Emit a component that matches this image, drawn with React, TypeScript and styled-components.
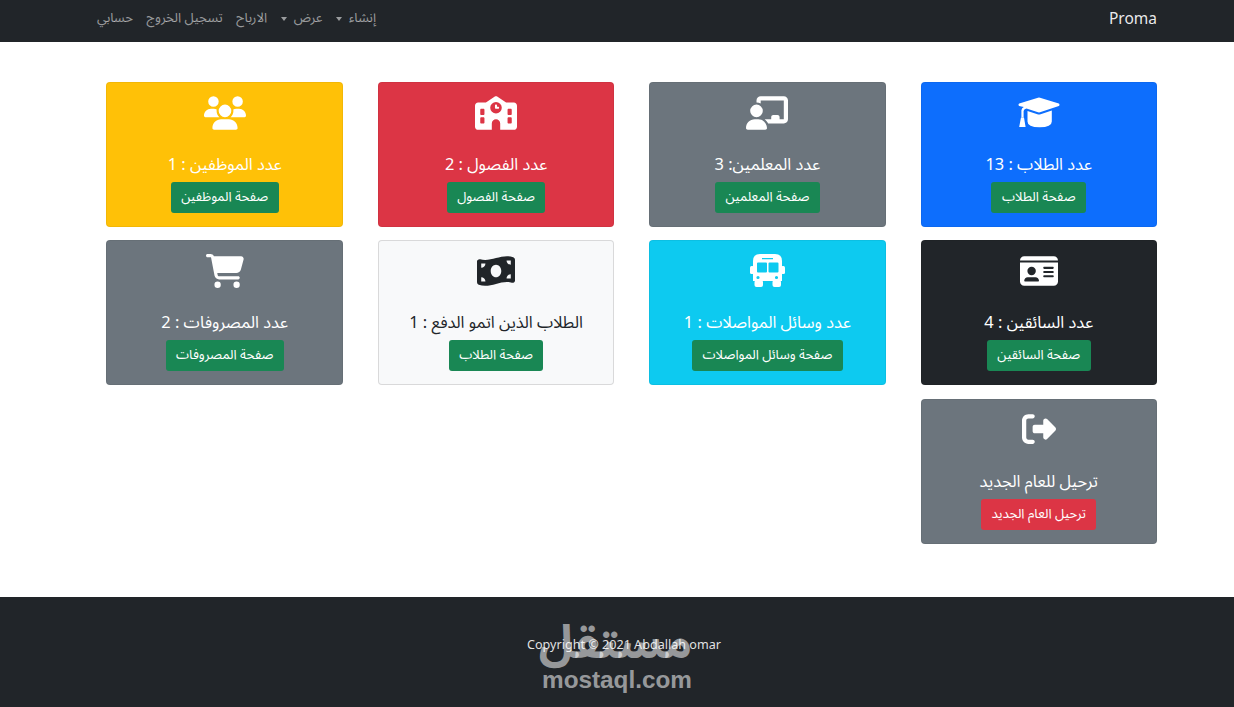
import React from "react";
import styled, { createGlobalStyle } from "styled-components";
import { FaChalkboardUser, FaSchool, FaUsers, FaIdCard, FaMoneyBillWave, FaCartShopping, FaRightFromBracket } from "react-icons/fa6";

const Global = createGlobalStyle`
  html, body { margin: 0; padding: 0; background: #fff; }
  body { font-family: "Noto Sans Arabic", "Noto Naskh Arabic", "Noto Sans", "DejaVu Sans", sans-serif; }
  * { box-sizing: border-box; }
`;

const Page = styled.div`
  position: relative;
  width: 1234px;
  height: 707px;
  overflow: hidden;
  display: flex;
  flex-direction: column;
`;

const Navbar = styled.nav`
  height: 42px;
  background: #212529;
  display: flex;
  align-items: center;
  justify-content: space-between;
  padding: 0 77px 2px 97px;
`;

const Brand = styled.a`
  color: rgba(255, 255, 255, 0.92);
  font-size: 15.5px;
  line-height: 1;
`;

const NavList = styled.div`
  display: flex;
  align-items: center;
  gap: 13.5px;
  margin-bottom: 2px;
`;

const NavItem = styled.a<{ $caret?: boolean }>`
  color: rgba(255, 255, 255, 0.55);
  font-size: 13.2px;
  line-height: 1;
  display: flex;
  align-items: center;
  gap: 7px;
  &::after {
    content: "";
    display: ${(p) => (p.$caret ? "block" : "none")};
    border-top: 4px solid rgba(255, 255, 255, 0.55);
    border-left: 3.5px solid transparent;
    border-right: 3.5px solid transparent;
  }
`;

const Grid = styled.main`
  flex: 1;
  display: grid;
  grid-template-columns: repeat(4, 236.5px);
  grid-auto-rows: 145px;
  column-gap: 34.87px;
  row-gap: 13.3px;
  padding: 40px 77px 0 106px;
  align-content: start;
`;

type Tone = "primary" | "secondary" | "danger" | "warning" | "info" | "light" | "dark";
const tones: Record<Tone, string> = {
  primary: "#0d6efd",
  secondary: "#6c757d",
  danger: "#dc3545",
  warning: "#ffc107",
  info: "#0dcaf0",
  light: "#f8f9fa",
  dark: "#212529",
};

const Card = styled.section<{ $tone: Tone }>`
  background: ${(p) => tones[p.$tone]};
  color: ${(p) => (p.$tone === "light" ? "#212529" : "#fff")};
  border: 1px solid ${(p) => (p.$tone === "light" ? "rgba(0, 0, 0, 0.125)" : "rgba(0, 0, 0, 0.05)")};
  border-radius: 4px;
  display: flex;
  flex-direction: column;
  align-items: center;
  padding-top: 13px;
`;

const IconWrap = styled.div<{ $size: number }>`
  height: 33px;
  display: flex;
  align-items: center;
  justify-content: center;
  svg {
    display: block;
    flex: none;
    width: ${(p) => p.$size}px;
    height: ${(p) => p.$size}px;
  }
`;

const Title = styled.h5`
  margin: 21px 0 0;
  height: 30px;
  font-size: 16.4px;
  font-weight: 400;
  line-height: 30px;
  white-space: nowrap;
`;

const Btn = styled.a<{ $danger?: boolean }>`
  margin-top: 2px;
  height: 31px;
  padding: 0 10.5px;
  border-radius: 3px;
  background: ${(p) => (p.$danger ? "#dc3545" : "#198754")};
  color: #fff;
  font-size: 13.2px;
  line-height: 30px;
  white-space: nowrap;
`;

const Footer = styled.footer`
  height: 110px;
  background: #212529;
  color: rgba(255, 255, 255, 0.88);
  display: flex;
  justify-content: center;
  padding: 39px 0 0 14px;
  font-size: 12.6px;
  line-height: 18px;
`;

const FooterText = styled.p`
  position: relative;
  z-index: 1;
  margin: 0;
  direction: ltr;
  font-family: "Noto Sans", sans-serif;
`;

const Watermark = styled.div`
  position: absolute;
  left: 542px;
  top: 620px;
  width: 150px;
  color: rgba(255, 255, 255, 0.55);
  text-align: center;
  pointer-events: none;
`;

const WatermarkAr = styled.div`
  font-size: 46px;
  font-weight: 700;
  line-height: 48px;
  height: 48px;
  white-space: nowrap;
`;

const WatermarkEn = styled.div`
  direction: ltr;
  font-family: "Liberation Sans", sans-serif;
  font-size: 24.3px;
  font-weight: 700;
  line-height: 24px;
`;

const CapIcon = () => (
  <svg viewBox="0 -4.5 42 42" fill="currentColor" aria-hidden="true">
    <path d="M20 1.2 Q21 0.9 22 1.2 L40.8 7 Q42.2 8.2 40.8 9.6 L22 15.8 Q21 16.1 20 15.8 L8.5 12 Q6.2 12.4 5.6 14.6 L5.6 21 L3.4 21 L3.4 13.8 Q3.8 11.4 5.8 10.6 L1.2 9.6 Q-0.2 8.2 1.2 7 Z" />
    <path d="M3 21 H6 L7.6 30.5 H1.2 Z" />
    <path d="M9.5 14.5 L19.4 17.8 Q21 18.3 22.6 17.8 L33.8 14.1 V25 Q33.8 30.8 21.6 30.8 Q9.5 30.8 9.5 25 Z" />
  </svg>
);

const BusIcon = () => (
  <svg viewBox="0 -1 35 35" fill="currentColor" aria-hidden="true">
    <path
      fillRule="evenodd"
      d="M10 0 H25 Q32 0 32 7 V27 H3 V7 Q3 0 10 0 Z M12 4 V5.3 H23 V4 Z M8 8.5 Q7 8.5 7 9.5 V17.5 Q7 18.5 8 18.5 H16 Q17 18.5 17 17.5 V9.5 Q17 8.5 16 8.5 Z M19.5 8.5 Q18.5 8.5 18.5 9.5 V17.5 Q18.5 18.5 19.5 18.5 H27.5 Q28.5 18.5 28.5 17.5 V9.5 Q28.5 8.5 27.5 8.5 Z M8 21.9 A1.6 1.6 0 1 0 8 25.1 A1.6 1.6 0 1 0 8 21.9 Z M26.5 21.9 A1.6 1.6 0 1 0 26.5 25.1 A1.6 1.6 0 1 0 26.5 21.9 Z"
    />
    <rect x="4.5" y="26" width="8.5" height="7" rx="2" />
    <rect x="22.5" y="26" width="8.5" height="7" rx="2" />
    <rect x="0" y="12" width="4" height="8" rx="1.5" />
    <rect x="31" y="12" width="4" height="8" rx="1.5" />
  </svg>
);

type Item = { tone: Tone; icon: React.ComponentType; size: number; title: string; action: string; danger?: boolean };

const items: Item[] = [
  { tone: "primary", icon: CapIcon, size: 42, title: "عدد الطلاب : 13", action: "صفحة الطلاب" },
  { tone: "secondary", icon: FaChalkboardUser, size: 42, title: "عدد المعلمين: 3", action: "صفحة المعلمين" },
  { tone: "danger", icon: FaSchool, size: 42, title: "عدد الفصول : 2", action: "صفحة الفصول" },
  { tone: "warning", icon: FaUsers, size: 42, title: "عدد الموظفين : 1", action: "صفحة الموظفين" },
  { tone: "dark", icon: FaIdCard, size: 38, title: "عدد السائقين : 4", action: "صفحة السائقين" },
  { tone: "info", icon: BusIcon, size: 35, title: "عدد وسائل المواصلات : 1", action: "صفحة وسائل المواصلات" },
  { tone: "light", icon: FaMoneyBillWave, size: 38, title: "الطلاب الذين اتمو الدفع : 1", action: "صفحة الطلاب" },
  { tone: "secondary", icon: FaCartShopping, size: 38, title: "عدد المصروفات : 2", action: "صفحة المصروفات" },
  { tone: "secondary", icon: FaRightFromBracket, size: 34, title: "ترحيل للعام الجديد", action: "ترحيل العام الجديد", danger: true },
];

export default function App() {
  return (
    <Page dir="rtl">
      <Global />
      <Navbar>
        <Brand>Proma</Brand>
        <NavList>
          <NavItem $caret>إنشاء</NavItem>
          <NavItem $caret>عرض</NavItem>
          <NavItem>الارباح</NavItem>
          <NavItem>تسجيل الخروج</NavItem>
          <NavItem>حسابي</NavItem>
        </NavList>
      </Navbar>
      <Grid>
        {items.map((it) => (
          <Card key={it.title} $tone={it.tone}>
            <IconWrap $size={it.size}>
              <it.icon />
            </IconWrap>
            <Title>{it.title}</Title>
            <Btn $danger={it.danger}>{it.action}</Btn>
          </Card>
        ))}
      </Grid>
      <Footer>
        <FooterText>Copyright © 2021 Abdallah omar</FooterText>
      </Footer>
      <Watermark>
        <WatermarkAr>مستقل</WatermarkAr>
        <WatermarkEn>mostaql.com</WatermarkEn>
      </Watermark>
    </Page>
  );
}
